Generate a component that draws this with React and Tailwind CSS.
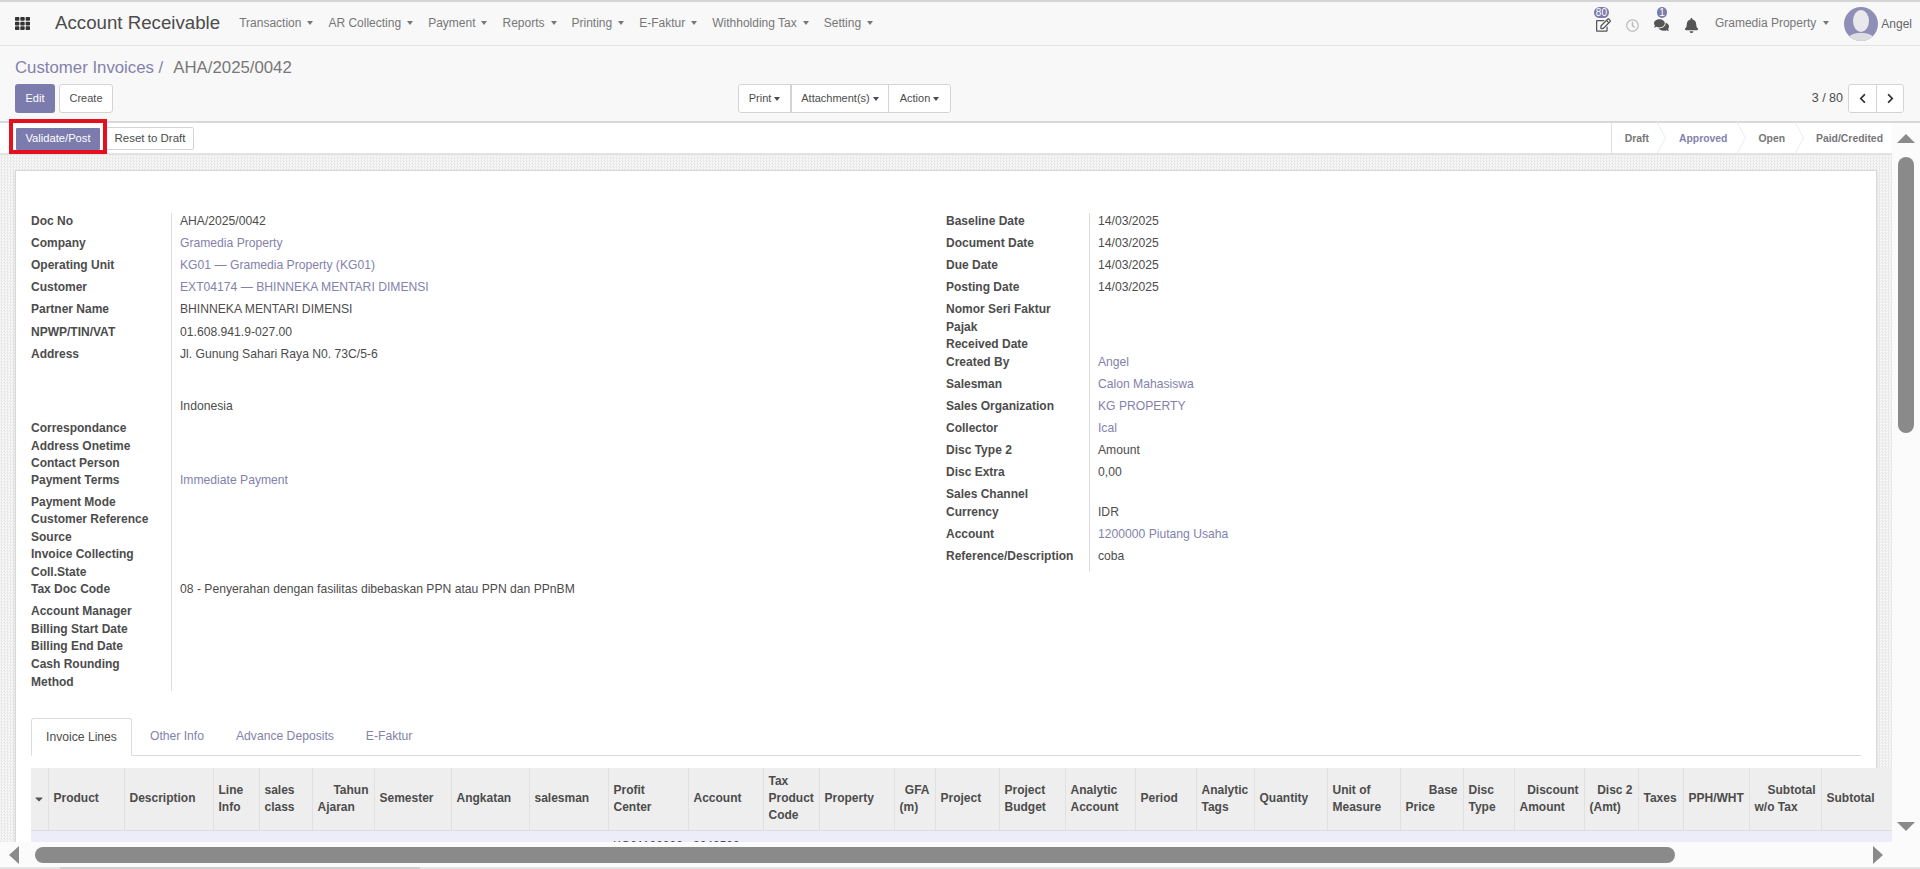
import { FaTh, FaRegEdit, FaRegClock, FaComments, FaBell, FaChevronLeft, FaChevronRight, FaCaretDown } from "react-icons/fa";

const menu = ["Transaction", "AR Collecting", "Payment", "Reports", "Printing", "E-Faktur", "Withholding Tax", "Setting"];

const leftRows = [
  { label: "Doc No", value: "AHA/2025/0042", h: "h-[22px]" },
  { label: "Company", value: "Gramedia Property", link: true, h: "h-[22px]" },
  { label: "Operating Unit", value: "KG01 — Gramedia Property (KG01)", link: true, h: "h-[22px]" },
  { label: "Customer", value: "EXT04174 — BHINNEKA MENTARI DIMENSI", link: true, h: "h-[22px]" },
  { label: "Partner Name", value: "BHINNEKA MENTARI DIMENSI", h: "h-[23px]" },
  { label: "NPWP/TIN/VAT", value: "01.608.941.9-027.00", h: "h-[22px]" },
  { label: "Address", value: "Jl. Gunung Sahari Raya N0. 73C/5-6", h: "h-[52px]" },
  { label: "", value: "Indonesia", h: "h-[22px]" },
  { label: "Correspondance Address Onetime", h: "h-[35px]" },
  { label: "Contact Person", h: "h-[17px]" },
  { label: "Payment Terms", value: "Immediate Payment", link: true, h: "h-[22px]" },
  { label: "Payment Mode", h: "h-[17px]" },
  { label: "Customer Reference Source", h: "h-[35px]" },
  { label: "Invoice Collecting", h: "h-[18px]" },
  { label: "Coll.State", h: "h-[17px]" },
  { label: "Tax Doc Code", value: "08 - Penyerahan dengan fasilitas dibebaskan PPN atau PPN dan PPnBM", h: "h-[22px]" },
  { label: "Account Manager", h: "h-[18px]" },
  { label: "Billing Start Date", h: "h-[17px]" },
  { label: "Billing End Date", h: "h-[18px]" },
  { label: "Cash Rounding Method", h: "h-[35px]" },
];

const rightRows = [
  { label: "Baseline Date", value: "14/03/2025", h: "h-[22px]" },
  { label: "Document Date", value: "14/03/2025", h: "h-[22px]" },
  { label: "Due Date", value: "14/03/2025", h: "h-[22px]" },
  { label: "Posting Date", value: "14/03/2025", h: "h-[22px]" },
  { label: "Nomor Seri Faktur Pajak", h: "h-[35px]" },
  { label: "Received Date", h: "h-[18px]" },
  { label: "Created By", value: "Angel", link: true, h: "h-[22px]" },
  { label: "Salesman", value: "Calon Mahasiswa", link: true, h: "h-[22px]" },
  { label: "Sales Organization", value: "KG PROPERTY", link: true, h: "h-[22px]" },
  { label: "Collector", value: "Ical", link: true, h: "h-[22px]" },
  { label: "Disc Type 2", value: "Amount", h: "h-[22px]" },
  { label: "Disc Extra", value: "0,00", h: "h-[22px]" },
  { label: "Sales Channel", h: "h-[18px]" },
  { label: "Currency", value: "IDR", h: "h-[22px]" },
  { label: "Account", value: "1200000 Piutang Usaha", link: true, h: "h-[22px]" },
  { label: "Reference/Description", value: "coba", h: "h-[22px]" },
];

const columns = [
  { w: "w-[76px]", label: "Product" },
  { w: "w-[89px]", label: "Description" },
  { w: "w-[46px]", label: "Line Info" },
  { w: "w-[53px]", label: "sales class" },
  { w: "w-[62px]", lines: ["Tahun", "Ajaran"] },
  { w: "w-[77px]", label: "Semester" },
  { w: "w-[78px]", label: "Angkatan" },
  { w: "w-[79px]", label: "salesman" },
  { w: "w-[80px]", label: "Profit Center", cell: "KG01100000" },
  { w: "w-[75px]", label: "Account", cell: "2040500" },
  { w: "w-[56px]", label: "Tax Product Code" },
  { w: "w-[75px]", label: "Property" },
  { w: "w-[41px]", lines: ["GFA", "(m)"] },
  { w: "w-[64px]", label: "Project" },
  { w: "w-[66px]", label: "Project Budget" },
  { w: "w-[70px]", label: "Analytic Account" },
  { w: "w-[61px]", label: "Period" },
  { w: "w-[58px]", label: "Analytic Tags" },
  { w: "w-[73px]", label: "Quantity" },
  { w: "w-[73px]", label: "Unit of Measure" },
  { w: "w-[63px]", lines: ["Base", "Price"] },
  { w: "w-[51px]", label: "Disc Type" },
  { w: "w-[70px]", lines: ["Discount", "Amount"] },
  { w: "w-[54px]", lines: ["Disc 2", "(Amt)"] },
  { w: "w-[45px]", label: "Taxes" },
  { w: "w-[66px]", label: "PPH/WHT" },
  { w: "w-[72px]", lines: ["Subtotal", "w/o Tax"] },
  { w: "w-[72px]", label: "Subtotal" },
];

function Caret({ className = "" }) {
  return <span className={`inline-block w-0 h-0 border-x-[3.5px] border-x-transparent border-t-[4px] border-t-current align-middle ${className}`} />;
}

function Field({ row, labelWidth }) {
  return (
    <div className={`flex ${row.h}`}>
      <div className={`${labelWidth} shrink-0 pr-2 font-bold text-[#4c4c4c]`}>{row.label}</div>
      <div className={`pl-[9px] text-[12.15px] whitespace-nowrap ${row.link ? "text-[#8382ab]" : "text-[#4c4c4c]"}`}>{row.value}</div>
    </div>
  );
}

function Badge({ children, className = "" }) {
  return (
    <span className={`absolute flex items-center justify-center h-[11px] rounded-full bg-[#7c7bad] text-white text-[10px] leading-none ${className}`}>
      {children}
    </span>
  );
}

function StatusChevron() {
  return (
    <svg width="9" height="32" viewBox="0 0 9 32" className="shrink-0">
      <polyline points="0,0 8.5,16 0,32" fill="none" stroke="#ececec" strokeWidth="1" />
    </svg>
  );
}

function Topbar() {
  return (
    <div className="h-[46px] flex items-center bg-[#f8f8f8] border-t-2 border-t-[#d4d4d4] border-b border-b-[#e2e2e2] text-[12px] text-[#777]">
      <FaTh className="ml-[14px] w-[17px] h-[15px] text-[#333]" />
      <span className="ml-[24px] text-[18.7px] leading-none text-[#4c4c4c]">Account Receivable</span>
      <div className="ml-[19px] -mt-[1px] flex gap-[15px]">
        {menu.map((item) => (
          <span key={item} className="flex items-center gap-[6px] whitespace-nowrap">
            {item} <Caret />
          </span>
        ))}
      </div>
      <div className="ml-auto flex items-center h-full">
        <span className="relative w-[15px] h-full mr-[15px]">
          <FaRegEdit className="absolute left-[0px] top-[16px] w-[15px] h-[14px] text-[#555]" />
          <Badge className="left-[-2px] top-[5px] w-[15px] text-[9px]">80</Badge>
        </span>
        <FaRegClock className="w-[13px] h-[13px] text-[#bbb] mr-[15px] mt-[3px]" />
        <span className="relative w-[15px] h-full mr-[15px]">
          <FaComments className="absolute left-0 top-[16px] w-[15px] h-[14px] text-[#555]" />
          <Badge className="left-[3px] top-[5px] w-[10px] text-[9px]">1</Badge>
        </span>
        <FaBell className="w-[15px] h-[15px] text-[#555] mr-[16px] mt-[3px]" />
        <span className="-mt-[1px] flex items-center gap-[7px] whitespace-nowrap">
          Gramedia Property <Caret />
        </span>
        <svg width="34" height="34" viewBox="0 0 34 34" className="ml-[15px] shrink-0">
          <clipPath id="avatar"><circle cx="17" cy="17" r="17" /></clipPath>
          <g clipPath="url(#avatar)">
            <rect width="34" height="34" fill="#8f8eb6" />
            <ellipse cx="17" cy="14" rx="8" ry="11" fill="#e9e9ec" />
            <path d="M3 34c1-7 8-8 14-8s13 1 14 8z" fill="#dcdce2" />
          </g>
        </svg>
        <span className="ml-[3px] mr-[8px] text-[#666]">Angel</span>
      </div>
    </div>
  );
}

function ControlPanel() {
  const btn = "h-[29px] flex items-center justify-center bg-white text-[11px] text-[#4c4c4c]";
  return (
    <div className="h-[77px] bg-[#f8f8f8] border-b-2 border-b-[#d8d8d8]">
      <div className="h-[42px] pl-[15px] pt-[2px] flex items-center text-[16.8px] leading-none">
        <span className="text-[#8382ab]">Customer Invoices /</span>
        <span className="ml-[10px] text-[#777]">AHA/2025/0042</span>
      </div>
      <div className="flex items-center pl-[15px] pr-[16px] -mt-[4px]">
        <button className={`${btn} w-[40px] !bg-[#7c7bad] !text-white rounded-[3px]`}>Edit</button>
        <button className={`${btn} w-[54px] ml-[4px] border border-[#d4d4d4] rounded-[3px]`}>Create</button>
        <div className="ml-[625px] flex border border-[#d4d4d4] rounded-[3px] bg-white">
          <button className={`${btn} !h-[27px] w-[53px] gap-[3px] border-r-2 border-r-[#d4d4d4] rounded-l-[3px]`}>Print <Caret /></button>
          <button className={`${btn} !h-[27px] w-[97px] gap-[3px] border-r border-r-[#d4d4d4]`}>Attachment(s) <Caret /></button>
          <button className={`${btn} !h-[27px] w-[61px] gap-[3px] rounded-r-[3px]`}>Action <Caret /></button>
        </div>
        <span className="ml-auto mr-[5px] text-[12.5px] text-[#4c4c4c]">3 / 80</span>
        <div className="flex border border-[#d4d4d4] rounded-[3px] bg-white">
          <button className={`${btn} !h-[27px] w-[28px] border-r border-r-[#d4d4d4] rounded-l-[3px]`}><FaChevronLeft className="w-[11px] h-[11px] text-[#333]" /></button>
          <button className={`${btn} !h-[27px] w-[26px] rounded-r-[3px]`}><FaChevronRight className="w-[11px] h-[11px] text-[#333]" /></button>
        </div>
      </div>
    </div>
  );
}

function StatusBar() {
  return (
    <div className="h-[32px] flex items-center bg-white border-b-2 border-b-[#e2e2e2] pl-[15px]">
      <div className="relative">
        <button className="w-[86px] h-[24px] bg-[#7c7bad] text-white text-[11.2px] rounded-[2px] border border-white">Validate/Post</button>
        {/* red highlight drawn over the button */}
        <span className="absolute -left-[6px] -top-[6px] w-[98px] h-[35px] border-[4px] border-[#e5101f]" />
      </div>
      <button className="ml-[5px] mt-[1px] w-[88px] h-[23px] bg-white border border-[#d4d4d4] rounded-[2px] text-[11.5px] text-[#4c4c4c]">Reset to Draft</button>
      <div className="ml-auto flex items-center h-full border-l border-l-[#e2e2e2] text-[10.4px] font-bold text-[#777]">
        <span className="ml-[13px] mt-[2px]">Draft</span>
        <span className="ml-[8px]"><StatusChevron /></span>
        <span className="ml-[13px] mt-[2px] text-[#8382ab]">Approved</span>
        <span className="ml-[10px]"><StatusChevron /></span>
        <span className="ml-[12px] mt-[2px]">Open</span>
        <span className="ml-[10px]"><StatusChevron /></span>
        <span className="ml-[12px] mt-[2px] mr-[9px]">Paid/Credited</span>
      </div>
    </div>
  );
}

function InvoiceTable() {
  return (
    <table className="table-fixed w-[1861px] border-collapse text-[12px] text-[#4c4c4c]">
      <thead>
        <tr className="h-[62px] bg-[#eeeeee] border-b border-b-[#dcdcdc]">
          <th className="w-[17px] border-r border-r-[#e0e0e0]">
            <FaCaretDown className="w-[12px] h-[12px] mx-auto text-[#555]" />
          </th>
          {columns.map((col) => (
            <th key={col.w + (col.label || col.lines[0])} className={`${col.w} px-[5px] font-bold text-left leading-[17px] border-r border-r-[#e0e0e0] last:border-r-0`}>
              {col.lines ? (
                <>
                  <div className="text-right">{col.lines[0]}</div>
                  <div>{col.lines[1]}</div>
                </>
              ) : (
                col.label
              )}
            </th>
          ))}
        </tr>
      </thead>
      <tbody>
        <tr className="h-[40px] bg-[#ecedf8] align-top">
          <td />
          {columns.map((col) => (
            <td key={col.w + (col.label || col.lines[0])} className="px-[5px] pt-[6px] whitespace-nowrap overflow-hidden">{col.cell}</td>
          ))}
        </tr>
      </tbody>
    </table>
  );
}

function Sheet() {
  return (
    <div className="ml-[15px] mt-[15px] w-[1862px] h-[700px] bg-white border border-[#d8d8d8] shadow-sm">
      <div className="pt-[42px] pl-[15px] text-[12px] leading-[17.5px] flex">
        <div className="w-[915px] shrink-0 relative">
          <span className="absolute left-[140px] top-0 w-px h-[478px] bg-[#dcdcdc]" />
          {leftRows.map((row) => (
            <Field key={row.label + row.value} row={row} labelWidth="w-[140px]" />
          ))}
        </div>
        <div className="relative">
          <span className="absolute left-[143px] top-0 w-px h-[359px] bg-[#dcdcdc]" />
          {rightRows.map((row) => (
            <Field key={row.label} row={row} labelWidth="w-[143px]" />
          ))}
        </div>
      </div>
      <div className="mt-[28px] ml-[15px] w-[1830px] h-[37px] flex items-end border-b border-b-[#dcdcdc] text-[12.15px] text-[#8382ab]">
        <span className="w-[101px] h-[38px] -mb-px flex items-center justify-center bg-white border border-[#dcdcdc] border-b-white rounded-t-[3px] text-[#4c4c4c]">Invoice Lines</span>
        <span className="h-[37px] flex items-center ml-[18px]">Other Info</span>
        <span className="h-[37px] flex items-center ml-[32px]">Advance Deposits</span>
        <span className="h-[37px] flex items-center ml-[32px]">E-Faktur</span>
      </div>
      <div className="mt-[12px] ml-[15px]">
        <InvoiceTable />
      </div>
    </div>
  );
}

function VerticalScrollbar() {
  return (
    <div className="w-[28px] shrink-0 bg-[#fbfbfb] flex flex-col items-center pt-[11px] relative z-10">
      <span className="w-0 h-0 border-x-[9px] border-x-transparent border-b-[9px] border-b-[#8a8a8a]" />
      <span className="mt-[14px] w-[16px] h-[276px] rounded-full bg-[#8a8a8a]" />
      <span className="mt-auto mb-[11px] w-0 h-0 border-x-[9px] border-x-transparent border-t-[9px] border-t-[#8a8a8a]" />
    </div>
  );
}

function HorizontalScrollbar() {
  return (
    <div className="relative z-20 h-[27px] bg-[#fbfbfb] flex items-center pl-[9px] border-b-2 border-b-[#e6e6e6]">
      <span className="w-0 h-0 border-y-[9px] border-y-transparent border-r-[10px] border-r-[#8a8a8a]" />
      <span className="ml-[16px] w-[1640px] h-[16px] rounded-full bg-[#8a8a8a]" />
      <span className="ml-[198px] w-0 h-0 border-y-[9px] border-y-transparent border-l-[10px] border-l-[#8a8a8a]" />
      <span className="absolute left-[60px] -bottom-[2px] w-[360px] h-[2px] bg-[#cfcfcf]" />
    </div>
  );
}

export default function App() {
  return (
    <div className="h-[869px] w-[1920px] overflow-hidden flex flex-col bg-white font-['Liberation_Sans',Arial,sans-serif]">
      <Topbar />
      <ControlPanel />
      <div className="flex-1 min-h-0 flex">
        <div className="flex-1 min-w-0 flex flex-col">
          <StatusBar />
          <div className="flex-1 min-h-0 overflow-hidden bg-[repeating-conic-gradient(#e9e9e9_0_25%,#f8f8f8_0_50%)] bg-[length:3px_3px]">
            <Sheet />
          </div>
        </div>
        <VerticalScrollbar />
      </div>
      <HorizontalScrollbar />
    </div>
  );
}
